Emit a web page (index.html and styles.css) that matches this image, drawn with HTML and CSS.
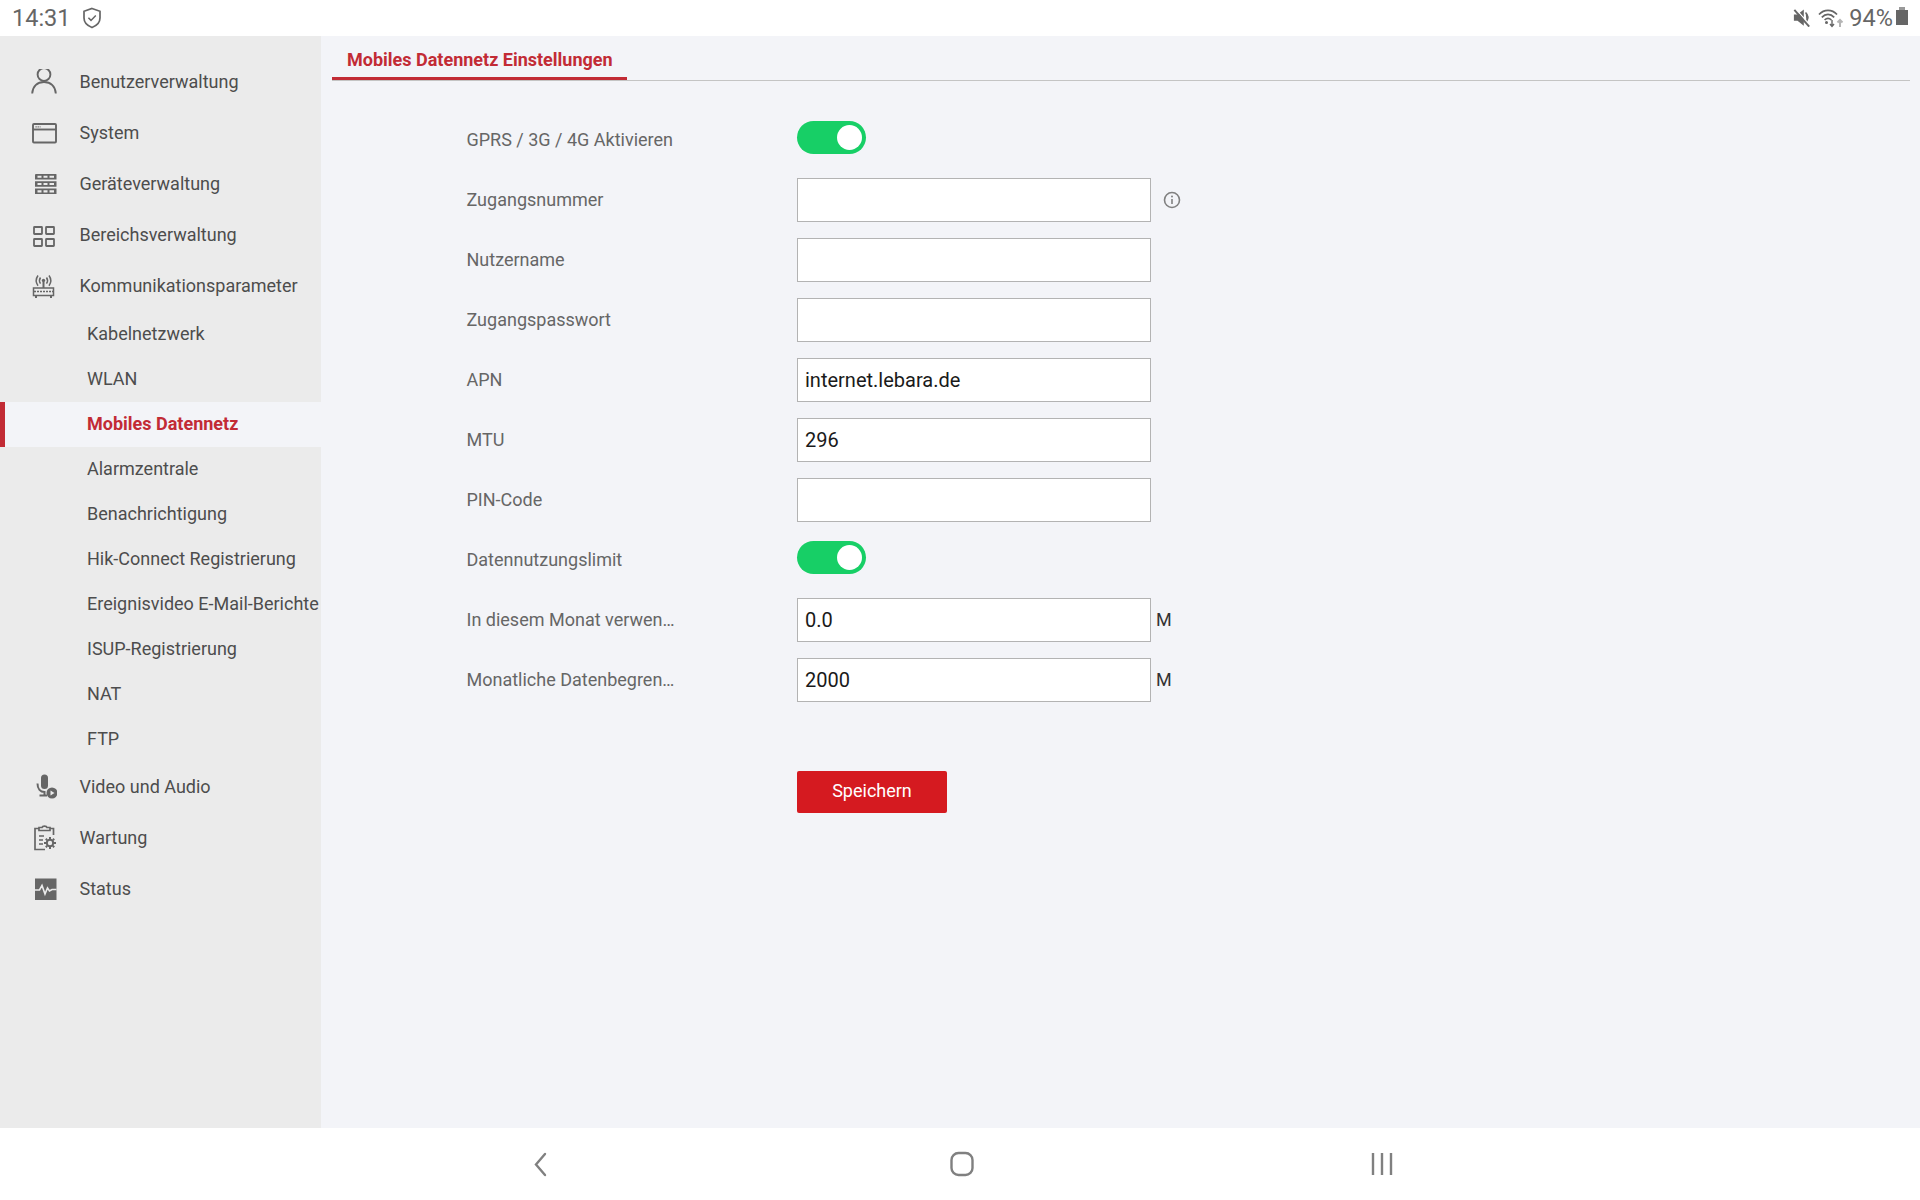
FILE: index.html
```html
<!DOCTYPE html>
<html lang="de">

<head>
  <meta charset="utf-8">
  <title>Mobiles Datennetz Einstellungen</title>
  <link rel="stylesheet" href="styles.css">
</head>

<body>
  <div class="statusbar">
    <div class="status-left">
      <span class="clock">14:31</span>
      <svg class="shield" width="20" height="22" viewBox="0 0 20 22" fill="none" stroke="#666" stroke-width="1.7">
        <path d="M10 1.5 L18 4.3 V11 C18 15.5 14.5 18.8 10 20.5 C5.5 18.8 2 15.5 2 11 V4.3 Z" />
        <path d="M6.4 10.8 L9 13.4 L13.8 8.4" stroke-width="1.5" />
      </svg>
    </div>
    <div class="status-right">
      <svg class="mute" width="18" height="18" viewBox="0 0 20 20" fill="#666">
        <path d="M1 6 H5 L12 0.5 V18.5 L5 13 H1 Z" />
        <path d="M14 4 C17 7 17 11 15 14" fill="#666" stroke="#666" stroke-width="1.6" />
        <path d="M3 0 L20 19" stroke="#fff" stroke-width="1.4" />
        <path d="M1.5 1 L18 19.5" stroke="#666" stroke-width="2.2" />
      </svg>
      <svg class="wifi" width="26" height="20" viewBox="0 0 26 20" fill="none" stroke="#666" stroke-width="1.7">
        <path d="M1 6.5 C6 1 14 1 19 6.5" />
        <path d="M3.8 9.3 C7.5 5.4 12.5 5.4 16.2 9.3" />
        <path d="M6.6 12 C8.8 9.8 11.2 9.8 13.4 12" />
        <circle cx="8.5" cy="14.6" r="1.5" fill="#666" stroke="none" />
        <path d="M14 12 V18 M12 16 L14 18.5 L16 16" stroke-width="1.4" />
        <path d="M22 19 V12 M19.5 14.5 L22 12 L24.5 14.5" stroke="#b5b5b5" stroke-width="2" />
      </svg>
      <span class="battery-level">94%</span>
      <span class="battery"></span>
    </div>
  </div>

  <div class="wrapper">
    <div class="sidebar">
      <div class="nav-item">
        <svg class="nav-icon" width="26" height="26" viewBox="0 2.5 26 26" fill="none" stroke="#666" stroke-width="1.9">
          <circle cx="13" cy="8" r="6.4" />
          <path d="M1.2 27 C1.8 19.5 6.5 15.5 13 15.5 C19.5 15.5 24.2 19.5 24.8 27" />
        </svg>
        Benutzerverwaltung
      </div>
      <div class="nav-item">
        <svg class="nav-icon" width="26" height="26" viewBox="0 0 26 26" fill="none" stroke="#666" stroke-width="1.9">
          <rect x="2" y="4" width="23" height="18.5" rx="1" />
          <path d="M2 9.5 H25" />
          <path d="M4.5 6.8 H9.5" stroke-width="1.2" stroke-dasharray="1.2 0.9" />
        </svg>
        System
      </div>
      <div class="nav-item">
        <svg class="nav-icon" width="26" height="26" viewBox="0 0 26 26" fill="#666">
          <path fill-rule="evenodd" d="M5 3 H25 Q25.5 3 25.5 3.5 V8.5 H4 V4 Q4 3 5 3 Z M6.5 4.7 V6.8 H10.5 V4.7 Z M12.5 4.7 V6.8 H16.5 V4.7 Z M18.5 4.7 V6.8 H23 V4.7 Z" />
          <path fill-rule="evenodd" d="M4 10.2 H25.5 V15.8 H4 Z M6.5 12 V14.1 H10.5 V12 Z M12.5 12 V14.1 H16.5 V12 Z M18.5 12 V14.1 H23 V12 Z" />
          <path fill-rule="evenodd" d="M4 17.5 H25.5 V23 H4 Z M6.5 19.3 V21.4 H10.5 V19.3 Z M12.5 19.3 V21.4 H16.5 V19.3 Z M18.5 19.3 V21.4 H23 V19.3 Z" />
        </svg>
        Geräteverwaltung
      </div>
      <div class="nav-item">
        <svg class="nav-icon" width="26" height="26" viewBox="0 0 26 26" fill="none" stroke="#666" stroke-width="1.8">
          <rect x="3" y="5" width="8" height="7" rx="0.5" />
          <rect x="15" y="5" width="8" height="7" rx="0.5" />
          <rect x="3" y="17" width="8" height="7" rx="0.5" />
          <rect x="15" y="17" width="8" height="7" rx="0.5" />
        </svg>
        Bereichsverwaltung
      </div>
      <div class="nav-item">
        <svg class="nav-icon" width="26" height="26" viewBox="0 0 26 26" fill="none" stroke="#666" stroke-width="1.5">
          <rect x="2.5" y="15" width="20" height="7.5" />
          <path d="M3 18.5 H22" stroke-width="1.4" stroke-dasharray="2 1" />
          <path d="M5 23 V25 M20 23 V25" stroke-width="2" />
          <path d="M12.5 9 V15" stroke-width="2" />
          <circle cx="12.5" cy="7.5" r="1.7" fill="#666" stroke="none" />
          <path d="M9.5 4.5 C8.2 6.4 8.2 8.8 9.5 10.7 M15.5 4.5 C16.8 6.4 16.8 8.8 15.5 10.7" />
          <path d="M7 2.5 C4.8 5.6 4.8 9.6 7 12.7 M18 2.5 C20.2 5.6 20.2 9.6 18 12.7" />
        </svg>
        Kommunikationsparameter
      </div>
      <div class="sub-list">
        <div class="sub-item">Kabelnetzwerk</div>
        <div class="sub-item">WLAN</div>
        <div class="sub-item active">Mobiles Datennetz</div>
        <div class="sub-item">Alarmzentrale</div>
        <div class="sub-item">Benachrichtigung</div>
        <div class="sub-item">Hik-Connect Registrierung</div>
        <div class="sub-item">Ereignisvideo E-Mail-Berichte</div>
        <div class="sub-item">ISUP-Registrierung</div>
        <div class="sub-item">NAT</div>
        <div class="sub-item">FTP</div>
      </div>
      <div class="nav-item">
        <svg class="nav-icon" width="26" height="26" viewBox="0 0 26 26" fill="#666">
          <rect x="10" y="0.5" width="7" height="14.5" rx="3.5" />
          <path d="M6.5 9.5 C6.5 15 9.5 18 13.5 18 V21.5 H8.5 M13.5 21.5 H16" fill="none" stroke="#666" stroke-width="2" />
          <circle cx="21" cy="19" r="5.5" />
          <path d="M19.5 16.5 L23.5 19 L19.5 21.5 Z" fill="#ebebeb" />
        </svg>
        Video und Audio
      </div>
      <div class="nav-item">
        <svg class="nav-icon" width="26" height="26" viewBox="0 0 26 26" fill="none" stroke="#666" stroke-width="1.7">
          <path d="M8 3.5 H4 V24.5 H14 M19 3.5 H22.5 V10" />
          <path d="M8 5.5 V2.5 H11 C11.5 0.6 15.5 0.6 16 2.5 H19 V5.5 Z" />
          <path d="M8 11 H13 M8 15 H12 M8 19 H12" stroke-width="1.5" />
          <circle cx="19" cy="18" r="3.2" stroke-width="2" />
          <path d="M19 12 V14 M19 22 V24 M13 18 H15 M23 18 H25 M14.8 13.8 L16.2 15.2 M21.8 20.8 L23.2 22.2 M14.8 22.2 L16.2 20.8 M21.8 15.2 L23.2 13.8" stroke-width="2" />
        </svg>
        Wartung
      </div>
      <div class="nav-item">
        <svg class="nav-icon" width="26" height="26" viewBox="0 0 26 26" fill="#666">
          <rect x="4" y="2.5" width="21.5" height="21.5" />
          <path d="M4 14 H8.5 L11 9.5 L14 18 L16.5 12 L18.5 15 L21 13.5 H25.5" fill="none" stroke="#ebebeb" stroke-width="1.6" />
        </svg>
        Status
      </div>
    </div>

    <div class="content">
      <div class="tabs">
        <div class="tab">Mobiles Datennetz Einstellungen</div>
      </div>

      <div class="form">
        <div class="row row-toggle">
          <label class="label">GPRS / 3G / 4G Aktivieren</label>
          <span class="toggle"><span class="knob"></span></span>
        </div>
        <div class="row">
          <label class="label">Zugangsnummer</label>
          <input class="field" type="text">
          <svg class="info" width="18" height="18" viewBox="0 0 18 18" fill="none" stroke="#808080" stroke-width="1.6">
            <circle cx="9" cy="9" r="7.5" />
            <path d="M9 8 V13" />
            <circle cx="9" cy="5.5" r="1" fill="#808080" stroke="none" />
          </svg>
        </div>
        <div class="row">
          <label class="label">Nutzername</label>
          <input class="field" type="text">
        </div>
        <div class="row">
          <label class="label">Zugangspasswort</label>
          <input class="field" type="text">
        </div>
        <div class="row">
          <label class="label">APN</label>
          <input class="field" type="text" value="internet.lebara.de">
        </div>
        <div class="row">
          <label class="label">MTU</label>
          <input class="field" type="text" value="296">
        </div>
        <div class="row">
          <label class="label">PIN-Code</label>
          <input class="field" type="text">
        </div>
        <div class="row row-toggle">
          <label class="label">Datennutzungslimit</label>
          <span class="toggle"><span class="knob"></span></span>
        </div>
        <div class="row">
          <label class="label">In diesem Monat verwen…</label>
          <input class="field" type="text" value="0.0">
          <span class="unit">M</span>
        </div>
        <div class="row">
          <label class="label">Monatliche Datenbegren…</label>
          <input class="field" type="text" value="2000">
          <span class="unit">M</span>
        </div>
        <button class="save">Speichern</button>
      </div>
    </div>
  </div>

  <div class="navbar">
    <svg width="14" height="25" viewBox="0 0 14 25" fill="none" stroke="#808080" stroke-width="2.4" stroke-linecap="round">
      <path d="M12 2 L3 12.5 L12 23" />
    </svg>
    <svg class="home" width="24" height="26" viewBox="0 0 24 26" fill="none" stroke="#808080" stroke-width="2.4">
      <rect x="1.5" y="2" width="21" height="22" rx="7" />
    </svg>
    <svg width="22" height="24" viewBox="0 0 22 24" fill="none" stroke="#808080" stroke-width="2.4">
      <path d="M2 1 V23 M11 1 V23 M20 1 V23" />
    </svg>
  </div>
</body>

</html>
```
FILE: styles.css
```css
* {
  box-sizing: border-box;
}

body {
  margin: 0;
  height: 1200px;
  background: #ffffff;
  font-family: Roboto, sans-serif;
  font-size: 18px;
  overflow: hidden;
}

/* status bar */
.statusbar {
  display: flex;
  justify-content: space-between;
  align-items: center;
  height: 36px;
  padding: 0 12px 0 12px;
  color: #666666;
  font-size: 23.5px;
}

.status-left,
.status-right {
  display: flex;
  align-items: center;
}

.shield {
  margin-left: 11px;
}

.mute {
  margin-bottom: 1px;
}

.wifi {
  margin: 0 0 1px 7px;
}

.battery-level {
  margin-left: 5px;
}

.battery {
  position: relative;
  width: 12px;
  height: 15px;
  margin: 0 0 2px 3px;
  background: #666666;
}

.battery::before {
  content: "";
  position: absolute;
  top: -3px;
  left: 3px;
  width: 6px;
  height: 3px;
  background: #999999;
}

/* main area */
.wrapper {
  display: flex;
  height: 1092px;
}

.sidebar {
  flex: none;
  width: 321px;
  padding-top: 20px;
  background: #ebebeb;
  color: #4d4d4d;
}

.nav-item {
  display: flex;
  align-items: center;
  height: 51px;
  padding-left: 31px;
}

.nav-icon {
  flex: none;
  margin-right: 22.5px;
}

.sub-item {
  height: 45px;
  padding-left: 87px;
  line-height: 45px;
  white-space: nowrap;
}

.sub-item.active {
  margin: 1px 0 -1px;
  padding-left: 82px;
  border-left: 5px solid #c22b35;
  background: #f3f4f8;
  color: #c22b35;
  font-weight: 700;
  line-height: 43px;
}

.content {
  flex: 1;
  background: #f3f4f8;
}

.tabs {
  height: 45px;
  margin: 0 10px 0 11px;
  border-bottom: 1px solid #c4c4c4;
}

.tab {
  width: 295px;
  height: 44px;
  padding-left: 15px;
  border-bottom: 3px solid #c22b35;
  color: #c22b35;
  font-weight: 700;
  line-height: 47px;
  white-space: nowrap;
}

.form {
  padding: 28px 0 0 145px;
}

.row {
  display: flex;
  align-items: center;
  height: 60px;
}

.row-toggle .toggle {
  margin-bottom: 4px;
}

.label {
  flex: none;
  width: 331px;
  padding-left: 0.5px;
  color: #666666;
  white-space: nowrap;
}

.field {
  width: 354px;
  height: 44px;
  margin-top: 2px;
  padding: 0 7px;
  border: 1px solid #b3b3b3;
  background: #ffffff;
  color: #1a1a1a;
  font-family: Roboto, sans-serif;
  font-size: 20px;
  outline: none;
}

.toggle {
  position: relative;
  display: block;
  width: 69px;
  height: 33px;
  border-radius: 17px;
  background: #17cf66;
}

.knob {
  position: absolute;
  top: 4px;
  right: 4px;
  width: 25px;
  height: 25px;
  border-radius: 50%;
  background: #ffffff;
}

.info {
  margin: 2px 0 0 12px;
}

.unit {
  margin-left: 5px;
  color: #333333;
}

.save {
  display: block;
  width: 150px;
  height: 42px;
  margin: 62px 0 0 331px;
  padding: 0 0 3px;
  border: 0;
  border-radius: 2px;
  background: #d51a20;
  color: #ffffff;
  font-family: Roboto, sans-serif;
  font-size: 18px;
}

/* bottom nav */
.navbar {
  display: flex;
  justify-content: space-between;
  align-items: center;
  height: 72px;
  padding: 0 527px 0 533px;
}

.home {
  margin-left: 6px;
}
```
